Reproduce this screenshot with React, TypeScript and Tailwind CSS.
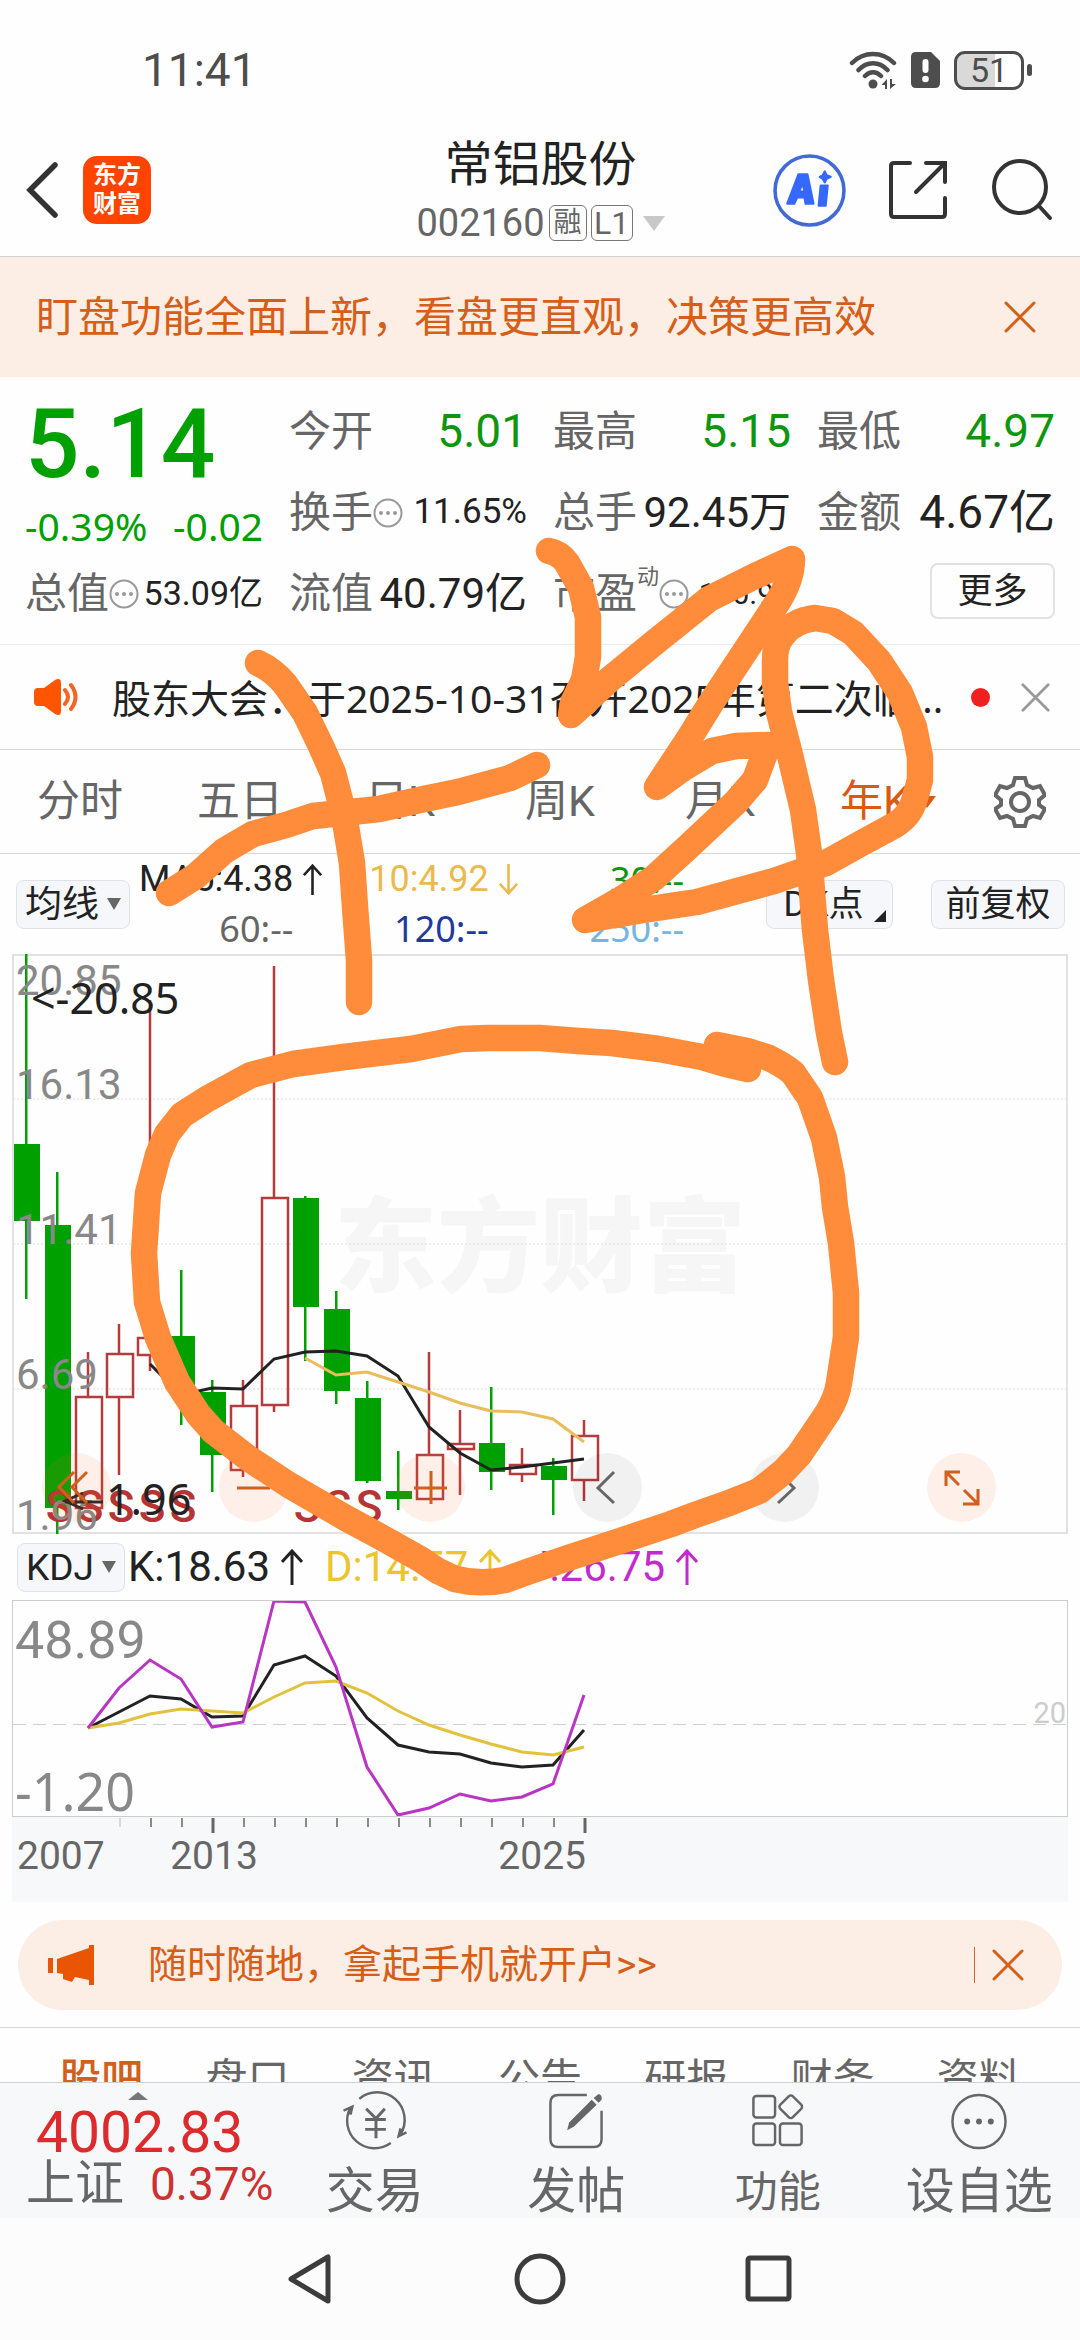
import React from "react";

const candles = [
  // [high, bodyTop, bodyBottom, low, rising]
  [0, 190, 267, 345, 0],
  [218, 271, 554, 580, 0],
  [398, 443, 554, 554, 1],
  [370, 400, 443, 521, 1],
  [46, 384, 401, 417, 1],
  [316, 382, 436, 471, 0],
  [426, 438, 501, 538, 0],
  [426, 452, 516, 523, 1],
  [12, 244, 451, 458, 1],
  [242, 244, 353, 407, 0],
  [337, 355, 437, 450, 0],
  [427, 444, 527, 529, 0],
  [497, 537, 545, 556, 0],
  [398, 501, 545, 545, 1],
  [456, 490, 495, 541, 1],
  [433, 489, 518, 536, 0],
  [494, 511, 520, 528, 1],
  [504, 512, 526, 561, 0],
  [466, 482, 526, 547, 1],
];

const ma5 = [410, 441, 434, 435, 405, 398, 397, 402, 422, 473, 499, 516, 513, 509, 505];
const ma10 = [404, 421, 418, 428, 438, 449, 457, 458, 465, 488];

const kLine = [128, 112, 96, 99, 117, 116, 65, 56, 76, 118, 145, 152, 154, 163, 167, 165, 130];
const dLine = [128, 123, 114, 109, 111, 113, 97, 83, 81, 93, 111, 125, 135, 144, 152, 155, 147];
const jLine = [128, 88, 60, 79, 127, 122, 1, 2, 67, 167, 215, 208, 194, 201, 197, 184, 95];

const STEP = 31;

function toPoints(values: number[], startIndex: number) {
  return values.map((v, i) => `${14 + (startIndex + i) * STEP},${v}`).join(" ");
}

function Cross({ className }: { className: string }) {
  return (
    <svg viewBox="0 0 32 32" className={className} fill="none" stroke="currentColor" strokeLinecap="round">
      <path d="M2 2 30 30M30 2 2 30" strokeWidth="3" />
    </svg>
  );
}

function Trend({ down = false, className }: { down?: boolean; className: string }) {
  return (
    <svg viewBox="0 0 22 36" className={className} fill="none" stroke="currentColor" strokeWidth="3">
      {down ? <path d="M11 0V33M1 23 11 34 21 23" /> : <path d="M11 36V3M1 13 11 2 21 13" />}
    </svg>
  );
}

function Hint() {
  return (
    <svg viewBox="0 0 30 30" className="size-[30px] text-[#999]" fill="currentColor">
      <circle cx="15" cy="15" r="13.5" fill="none" stroke="currentColor" strokeWidth="2" />
      <circle cx="8" cy="15" r="2" />
      <circle cx="15" cy="15" r="2" />
      <circle cx="22" cy="15" r="2" />
    </svg>
  );
}

function StatusBar() {
  return (
    <div className="flex h-[124px] items-center justify-between pt-4 pl-[142px] pr-12 text-[#4d4d4d]">
      <span className="text-[46px] leading-none">11:41</span>
      <div className="flex items-center gap-[14px]">
        <svg viewBox="0 0 48 38" className="h-[38px] w-12" fill="none" stroke="currentColor" strokeLinecap="round" strokeWidth="4.5">
          <path d="M3 12C15 0 33 0 45 12M9.500 19C18 10 30 10 38.500 19M16 25C21 20 27 20 32 25" />
          <circle cx="24" cy="33" r="4.500" fill="currentColor" stroke="none" />
          <path d="M32.500 34 38 28V38H36V34ZM47 33 41 38V28H43V33Z" fill="currentColor" stroke="none" />
        </svg>
        <svg viewBox="0 0 29 36" className="h-9 w-[29px]">
          <path d="M5 0H20L29 9V31Q29 36 24 36H5Q0 36 0 31V5Q0 0 5 0Z" fill="currentColor" />
          <path d="M14.500 10V18" stroke="#fff" strokeWidth="6" strokeLinecap="round" />
          <circle cx="14.500" cy="27" r="3.300" fill="#fff" />
        </svg>
        <div className="flex items-center gap-[3px]">
          <div className="flex h-[39px] w-[70px] items-center justify-center rounded-[11px] border-3 border-[#4d4d4d] bg-linear-to-r from-[#d9d9d9] from-60% to-white to-60% text-[34px] leading-none">
            51
          </div>
          <div className="h-3 w-[5px] rounded-full bg-[#4d4d4d]" />
        </div>
      </div>
    </div>
  );
}

function Header() {
  return (
    <header className="grid h-[133px] grid-cols-[1fr_auto_1fr] items-center border-b border-[#d2d2d2] pr-[27px] pl-[26px]">
      <div className="flex items-center gap-[24px]">
        <button aria-label="返回">
          <svg viewBox="0 0 33 56" className="h-14 w-[33px]" fill="none" stroke="#333" strokeWidth="5.500" strokeLinecap="round">
            <path d="M29 3 4 28 29 53" />
          </svg>
        </button>
        <div className="flex size-[68px] flex-col items-center justify-center rounded-[14px] bg-[#ff4400] text-2xl leading-[29px] font-bold text-white">
          <span>东方</span>
          <span>财富</span>
        </div>
      </div>
      <div className="flex flex-col items-center pt-1 pl-[2px]">
        <h1 className="text-[48px] leading-[62px] text-[#222]">常铝股份</h1>
        <button className="flex h-[54px] items-center text-[#666]">
          <span className="text-[38px]">002160</span>
          <span className="ml-1 flex h-9 w-[38px] items-center justify-center rounded-md border border-[#777] text-[28px]">融</span>
          <span className="ml-1 flex h-9 w-[42px] items-center justify-center rounded-md border border-[#777] text-[32px]">L1</span>
          <svg viewBox="0 0 22 15" className="ml-[10px] h-[15px] w-[22px]" fill="#c8c8c8">
            <path d="M0 0H22L11 15Z" />
          </svg>
        </button>
      </div>
      <div className="flex items-center justify-end">
        <button aria-label="AI">
          <svg viewBox="0 0 72 72" className="size-[73px]">
            <circle cx="36" cy="36" r="34" fill="none" stroke="#4169d8" strokeWidth="3.500" />
            <path fill="#3568fb" stroke="#3568fb" strokeWidth="2" strokeLinejoin="round" fillRule="evenodd" d="M25 20H34L40 49H32L31 43H24L21 49H14ZM29 29 26 37H31Z" />
            <path fill="#3568fb" stroke="#3568fb" strokeWidth="2" strokeLinejoin="round" d="M47 31H54L52 51H45ZM51 17 53 21 57 22.500 53 24.500 51 28 49 24.500 46 22.500 49 21Z" />
          </svg>
        </button>
        <button aria-label="分享" className="ml-[42px]">
          <svg viewBox="0 0 60 60" className="size-[60px]" fill="none" stroke="#333" strokeWidth="4" strokeLinecap="round">
            <path d="M22 3H6Q3 3 3 6V54Q3 57 6 57H54Q57 57 57 54V38M38 3H57V22M56 4 28 32" />
          </svg>
        </button>
        <button aria-label="搜索" className="ml-[43px]">
          <svg viewBox="0 0 62 64" className="h-16 w-[62px]" fill="none" stroke="#333" strokeWidth="4" strokeLinecap="round">
            <circle cx="29" cy="29" r="26" />
            <path d="M48 48 59 60" />
          </svg>
        </button>
      </div>
    </header>
  );
}

function Stat({ label, value, size, color = "text-[#222]", note, sup }: {
  label: string;
  value: string;
  size: string;
  color?: string;
  note?: boolean;
  sup?: string;
}) {
  return (
    <div className="flex h-[81px] items-center justify-between whitespace-nowrap">
      <div className="flex items-center text-[42px] text-[#666]">
        {label}
        {sup && <sup className="top-0 self-start pt-1 text-[22px] leading-none">{sup}</sup>}
        {note && <Hint />}
      </div>
      <span className={`${size} ${color}`}>{value}</span>
    </div>
  );
}

function Quote() {
  return (
    <section className="grid grid-cols-4 gap-x-[26px] border-b border-[#ebebeb] px-[25px] pt-[14px] pb-[10px]">
      <div className="row-span-2 text-[#00a000]">
        <div className="h-[106px] text-[96px] leading-[106px] font-medium">5.14</div>
        <div className="flex h-14 items-center justify-between font-['Noto_Sans'] text-[39px] leading-none">
          <span>-0.39%</span>
          <span>-0.02</span>
        </div>
      </div>
      <Stat label="今开" value="5.01" size="text-[46px]" color="text-[#0f960f]" />
      <Stat label="最高" value="5.15" size="text-[46px]" color="text-[#0f960f]" />
      <Stat label="最低" value="4.97" size="text-[46px]" color="text-[#0f960f]" />
      <Stat label="换手" value="11.65%" size="text-[35px]" note />
      <Stat label="总手" value="92.45万" size="text-[42px]" />
      <Stat label="金额" value="4.67亿" size="text-[46px]" />
      <Stat label="总值" value="53.09亿" size="text-[34px]" note />
      <Stat label="流值" value="40.79亿" size="text-[42px]" />
      <Stat label="市盈" value="130.95" size="text-[30px]" note sup="动" />
      <div className="flex h-[81px] items-start justify-end pt-[10px]">
        <button className="h-14 w-[125px] rounded-lg border-2 border-[#e2e2e2] text-[35px] leading-none text-[#222]">更多</button>
      </div>
    </section>
  );
}

function Notice() {
  return (
    <section className="flex h-[105px] items-center border-b border-[#d6d8da] pr-[30px] pl-[34px]">
      <svg viewBox="0 0 44 36" className="h-9 w-11 shrink-0" fill="#ff5500">
        <path d="M4 9H10L21 1Q27-2 27 4V32Q27 38 21 35L10 27H4Q0 27 0 23V13Q0 9 4 9Z" />
        <path d="M31 11Q37 18 31 25M37 6Q46 18 37 30" fill="none" stroke="#f26522" strokeWidth="4" strokeLinecap="round" />
      </svg>
      <a
        href="#notice"
        className="ml-[34px] flex-1 font-['Noto_Sans','Noto_Sans_CJK_SC',sans-serif] text-[39px] leading-none whitespace-nowrap text-[#222]"
      >
        股东大会：于2025-10-31召开2025年第二次临...
      </a>
      <span className="size-[19px] rounded-full bg-[#f0201e]" />
      <button aria-label="关闭公告" className="ml-[31px]">
        <Cross className="size-[29px] text-[#999]" />
      </button>
    </section>
  );
}

function PeriodTabs() {
  return (
    <nav className="flex h-[104px] border-b border-[#d6d8da] text-[43px] text-[#666]">
      {["分时", "五日", "日K", "周K", "月K"].map((t) => (
        <button key={t} className="flex-[4]">{t}</button>
      ))}
      <button className="flex-[4] text-[#d95a12]">
        <span className="flex items-center justify-center gap-2 pl-4">
          年K
          <svg viewBox="0 0 18 12" className="h-3 w-[18px]" fill="currentColor">
            <path d="M0 0H18L9 12Z" />
          </svg>
        </span>
      </button>
      <button aria-label="设置" className="flex flex-[3] items-center justify-center">
        <svg viewBox="0 0 52 52" className="size-[52px]" fill="none" stroke="currentColor" strokeWidth="4">
          <path d="M21 2H31L33 9 39 12 46 10 51 19 45 24V29L51 33 46 42 39 40 33 43 31 50H21L19 43 13 40 6 42 1 33 7 29V24L1 19 6 10 13 12 19 9Z" />
          <circle cx="26" cy="26" r="9" />
        </svg>
      </button>
    </nav>
  );
}

function Picker({ label, options, className }: { label: string; options: string[]; className: string }) {
  return (
    <div className={`relative h-[49px] shrink-0 ${className}`}>
      <select
        aria-label={label}
        className="h-full w-full appearance-none rounded-lg border border-[#dfe2e8] bg-[#f5f7fa] pl-2 text-[37px] leading-none text-[#222]"
      >
        {options.map((o) => (
          <option key={o}>{o}</option>
        ))}
      </select>
      <svg viewBox="0 0 14 12" className="pointer-events-none absolute top-[18px] right-[9px] h-3 w-[14px]" fill="#666">
        <path d="M0 0H14L7 12Z" />
      </svg>
    </div>
  );
}

function AverageRow() {
  const items = [
    { text: "MA5:4.38", color: "text-[#222]", trend: "up" },
    { text: "10:4.92", color: "text-[#ecb94f]", trend: "down" },
    { text: "30:--", color: "font-['Noto_Sans'] text-[#0f960f]" },
    { text: "60:--", color: "font-['Noto_Sans'] text-[#666]" },
    { text: "120:--", color: "font-['Noto_Sans'] text-[#20399b]" },
    { text: "250:--", color: "font-['Noto_Sans'] text-[#74b5e4]" },
  ];
  return (
    <section className="flex h-[100px] items-center pr-[15px] pl-4">
      <Picker label="指标" options={["均线"]} className="w-[114px]" />
      <div className="grid w-[586px] grid-cols-3 text-[36px] leading-[49px]">
        {items.map((it) => (
          <div key={it.text} className={`flex items-center justify-end gap-[10px] ${it.color}`}>
            {it.text}
            <span className="w-[22px]">
              {it.trend && <Trend down={it.trend === "down"} className="h-[31px] w-[19px]" />}
            </span>
          </div>
        ))}
      </div>
      <button className="relative ml-auto h-[49px] w-[127px] rounded-lg border border-[#dfe2e8] bg-[#f5f7fa] pr-3 text-[35px] leading-none text-[#222]">
        DK点
        <svg viewBox="0 0 12 12" className="absolute right-[6px] bottom-[6px] size-3" fill="#222">
          <path d="M12 0V12H0Z" />
        </svg>
      </button>
      <button className="ml-[38px] h-[49px] w-[134px] rounded-lg border border-[#dfe2e8] bg-[#f5f7fa] text-[35px] leading-none text-[#222]">
        前复权
      </button>
    </section>
  );
}

function ChartButton({ label, gray, d }: { label: string; gray?: boolean; d: string }) {
  return (
    <button
      aria-label={label}
      className={`size-[69px] rounded-full ${gray ? "bg-black/5 text-[#666]" : "bg-[#ff6a20]/10 text-[#d0601c]"}`}
    >
      <svg viewBox="0 0 69 69" className="size-full" fill="none" stroke="currentColor" strokeWidth="3">
        <path d={d} />
      </svg>
    </button>
  );
}

function PriceChart() {
  const grid = [
    { y: 145, label: "16.13" },
    { y: 290, label: "11.41" },
    { y: 435, label: "6.69" },
  ];
  return (
    <section className="relative mx-3">
      <svg viewBox="0 0 1056 580" className="block w-full">
        <text x="528" y="330" fontSize="103" fontWeight="900" textAnchor="middle" fill="#f6f6f6">东方财富</text>
        {grid.map((g) => (
          <line key={g.y} x1="1" x2="1055" y1={g.y} y2={g.y} stroke="#dcdcdc" strokeDasharray="2 2" />
        ))}
        <rect x="1" y="1" width="1054" height="578" fill="none" stroke="#e2e2e2" strokeWidth="2" />
        {candles.map(([high, top, bottom, low, rising], i) => {
          const x = 14 + i * STEP;
          return rising ? (
            <g key={i} fill="none" stroke="#b53c3c" strokeWidth="2.500">
              <path d={`M${x} ${high}V${top}M${x} ${bottom}V${low}`} />
              <rect x={x - 12} y={top} width="26" height={bottom - top} />
            </g>
          ) : (
            <g key={i} fill="#00a000">
              <rect x={x - 1} y={high} width="2.500" height={low - high} />
              <rect x={x - 12} y={top} width="26" height={bottom - top} />
            </g>
          );
        })}
        <polyline points={toPoints(ma5, 4)} fill="none" stroke="#222" strokeWidth="3" />
        <polyline points={toPoints(ma10, 9)} fill="none" stroke="#e9bd5b" strokeWidth="3" />
        <g fontSize="44" fontWeight="500" fill="#b73434" textAnchor="middle">
          {[47, 78, 109, 140, 171, 295, 326, 357].map((x) => (
            <text key={x} x={x} y="568">S</text>
          ))}
        </g>
        <g fontSize="42" fill="#888">
          <text x="4" y="41">20.85</text>
          {grid.map((g) => (
            <text key={g.y} x="4" y={g.y}>{g.label}</text>
          ))}
          <text x="4" y="576">1.96</text>
        </g>
        <g fontSize="43" fill="#222" className="font-['Noto_Sans']">
          <text x="19" y="60">&lt;-20.85</text>
          <text x="94" y="561">1.96</text>
          <path d="M71 539 53 547 71 555M53 548H91" fill="none" stroke="#222" strokeWidth="3" />
        </g>
      </svg>
      <div className="absolute inset-x-0 bottom-[12px] flex justify-between pr-[72px] pl-[30px]">
        <ChartButton label="最早" d="M32 19 17 34 32 50M45 19 30 34 45 50" />
        <ChartButton label="缩小" d="M18 35H51" />
        <ChartButton label="放大" d="M18 35H51M35 18V51" />
        <ChartButton label="前移" gray d="M41 19 25 35 41 50" />
        <ChartButton label="后移" gray d="M28 19 44 35 28 50" />
        <ChartButton label="全屏" d="M19 33V19H33M19 19 32 32M37 37 50 50M36 51H51V36" />
      </div>
    </section>
  );
}

function KdjChart() {
  return (
    <section className="mx-3">
      <div className="flex h-[66px] items-center pl-[5px] text-[42px] leading-none">
        <Picker label="副图指标" options={["KDJ"]} className="w-[108px]" />
        <div className="ml-[3px] flex items-center gap-[11px] text-[#222]">
          K:18.63
          <Trend className="h-9 w-[22px]" />
        </div>
        <div className="ml-[22px] flex items-center gap-[11px] text-[#ecc52e]">
          D:14.57
          <Trend className="h-9 w-[22px]" />
        </div>
        <div className="ml-[25px] flex items-center gap-[11px] text-[#c02ccb]">
          J:26.75
          <Trend className="h-9 w-[22px]" />
        </div>
      </div>
      <svg viewBox="0 0 1056 302" className="block w-full">
        <rect x="0" y="217" width="1056" height="85" fill="#f7f8fa" />
        <line x1="1" x2="1055" y1="124.500" y2="124.500" stroke="#cfcfcf" strokeDasharray="13 7" />
        <g fontSize="52" fill="#888">
          <text x="3" y="58">48.89</text>
          <text x="3" y="211" className="font-['Noto_Sans']">-1.20</text>
        </g>
        <text x="1054" y="123" fontSize="29" textAnchor="end" fill="#ccc">20</text>
        <polyline points={toPoints(kLine, 2)} fill="none" stroke="#222" strokeWidth="3" />
        <polyline points={toPoints(dLine, 2)} fill="none" stroke="#e2c23c" strokeWidth="3" />
        <polyline points={toPoints(jLine, 2)} fill="none" stroke="#b935c4" strokeWidth="3" />
        <rect x="0.500" y="0.500" width="1055" height="216" fill="none" stroke="#ccc" />
        {Array.from({ length: 16 }, (_, i) => {
          const long = i === 3 || i === 15;
          return (
            <line
              key={i}
              x1={108 + i * STEP}
              x2={108 + i * STEP}
              y1="218"
              y2={long ? 233 : 227}
              stroke={i === 0 ? "#ccc" : "#666"}
              strokeWidth={long ? 3 : 1.5}
            />
          );
        })}
        <g fontSize="39" fill="#666">
          <text x="5" y="269">2007</text>
          <text x="202" y="269" textAnchor="middle">2013</text>
          <text x="574" y="269" textAnchor="end">2025</text>
        </g>
      </svg>
    </section>
  );
}

function OpenAccount() {
  return (
    <section className="mx-[18px] mt-[18px] mb-[17px] flex h-[90px] items-center rounded-full bg-[#fcede5] pr-[38px] pl-[30px] text-[#d65e16]">
      <svg viewBox="0 0 46 40" className="h-10 w-[46px]" fill="#ea5504">
        <path d="M0 13H5V28H0ZM9 14 41 3V0H46V40H41V35L27 32 24 37 15 34V29L9 28Z" />
      </svg>
      <a href="#open" className="ml-[54px] text-[39px]">随时随地，拿起手机就开户&gt;&gt;</a>
      <span className="ml-auto h-9 w-px bg-[#c8672c]" />
      <button aria-label="关闭广告" className="ml-[17px]">
        <Cross className="size-8" />
      </button>
    </section>
  );
}

function InfoTabs() {
  return (
    <nav className="flex h-[55px] overflow-hidden border-t border-[#d2d6d9] px-7 pt-[22px] text-[42px] leading-[60px] text-[#666]">
      {["股吧", "盘口", "资讯", "公告", "研报", "财务", "资料"].map((t, i) => (
        <button key={t} className={i === 0 ? "h-[60px] flex-1 font-medium text-[#d0601c]" : "h-[60px] flex-1"}>
          {t}
        </button>
      ))}
    </nav>
  );
}

function Action({ label, size = "text-[49px]", children }: { label: string; size?: string; children: React.ReactNode }) {
  return (
    <button className="flex flex-1 flex-col items-center pt-2 whitespace-nowrap">
      <svg viewBox="0 0 66 60" className="h-[60px] w-[66px]" fill="none" stroke="currentColor" strokeWidth="2.500">
        {children}
      </svg>
      <span className={`${size} mt-4 leading-[52px]`}>{label}</span>
    </button>
  );
}

function BottomBar() {
  return (
    <footer className="flex h-[136px] border-t border-[#cfd2d5] bg-[#f6f8fa] text-[#666]">
      <button className="flex w-[274px] shrink-0 flex-col pl-[26px] text-left">
        <svg viewBox="0 0 20 8" className="mt-[9px] ml-[102px] h-2 w-5" fill="#777">
          <path d="M10 0 20 8H0Z" />
        </svg>
        <span className="mt-[3px] ml-[10px] text-[57px] leading-[60px] text-[#dd2a2c]">4002.83</span>
        <span className="flex items-center leading-[42px]">
          <span className="text-[49px]">上证</span>
          <span className="ml-[26px] text-[46px] text-[#cf3030]">0.37%</span>
        </span>
      </button>
      <Action label="交易">
        <path d="M17 8A28 28 0 0 1 59 44M49 53A28 28 0 0 1 8 17M1 20 10 16 8 24M65 42 57 46 59 38" />
        <path d="M24 18 34 28 43 18M34 28V48M23 29H44M23 39H44" strokeWidth="3" />
      </Action>
      <Action label="发帖">
        <path d="M44 4H15Q7 4 7 12V49Q7 57 15 57H51Q59 57 59 49V20" />
        <path d="M24 40 26 32 49 9 54 14 31 36ZM51 7 56 3Q60 4 59 9L56 12Z" fill="currentColor" stroke="none" />
      </Action>
      <Action label="功能" size="text-[43px]">
        <rect x="8" y="5" width="22" height="22" rx="3" />
        <rect x="8" y="33" width="22" height="22" rx="3" />
        <rect x="35" y="33" width="22" height="22" rx="3" />
        <rect x="37" y="7" width="18" height="18" rx="3" transform="rotate(45 46 16)" />
      </Action>
      <Action label="设自选">
        <circle cx="33" cy="31" r="27" />
        <g fill="currentColor" stroke="none">
          <circle cx="21" cy="31" r="3" />
          <circle cx="33" cy="31" r="3" />
          <circle cx="45" cy="31" r="3" />
        </g>
      </Action>
    </footer>
  );
}

function SystemNav() {
  return (
    <div className="flex h-[122px] items-center justify-center gap-[178px] bg-[#fcfcfc]">
      <button aria-label="后退">
        <svg viewBox="0 0 52 52" className="size-[52px]" fill="none" stroke="#3c3c3c" strokeWidth="5" strokeLinejoin="round">
          <path d="M7 26 44 4V48Z" />
        </svg>
      </button>
      <button aria-label="主页">
        <svg viewBox="0 0 52 52" className="size-[52px]" fill="none" stroke="#3c3c3c" strokeWidth="5">
          <circle cx="26" cy="26" r="23" />
        </svg>
      </button>
      <button aria-label="最近任务">
        <svg viewBox="0 0 52 52" className="size-[52px]" fill="none" stroke="#3c3c3c" strokeWidth="5">
          <rect x="4" y="5" width="41" height="41" rx="2" />
        </svg>
      </button>
    </div>
  );
}

// Hand-drawn marker notes on top of the page
function Scribble() {
  return (
    <svg
      viewBox="0 0 1080 2340"
      className="pointer-events-none absolute inset-x-0 top-0 w-full"
      fill="none"
      stroke="#ff8c3b"
      strokeWidth="26.500"
      strokeLinecap="round"
      strokeLinejoin="round"
    >
      <path d="M169 893 196 876 224 851 253 834 286 825 313 816 351 812 379 809 424 799 458 792 510 778 537 765" />
      <path d="M258 663Q273 670 285 684L305 713 321 746 333 773 340 800 346 827 352 863 355 907 359 960V1002" />
      <path d="M549 551Q560 553 567 563L581 588 588 617V657L584 680 573 703 571 715 609 680 654 643 709 599 753 577 792 559Q792 580 777 603L746 650 711 703 690 737 657 787 682 769 712 751 736 746 768 745 755 780 736 802 688 847 654 878 620 900 585 920 643 910 697 902 774 881 826 863 860 844 895 825Q911 815 915 798L920 780V757L914 727 900 693 879 661 853 633 833 621 815 618Q793 621 783 635 775 644 775 660V683L779 712 790 755 803 810 809 853 815 930 821 980 829 1033 835 1062" />
      <path d="M717 1045 747 1051 769 1058Q785 1066 793 1073L810 1098 824 1138 832 1177 835 1207 841 1243 846 1293V1337L839 1383Q837 1397 828 1412L816 1430 799 1455 783 1472 759 1491 729 1503 695 1515 671 1524 623 1540 568 1558 530 1571 505 1580Q480 1585 455 1579L438 1571 420 1559 379 1536 344 1517 289 1485 248 1458 213 1431 198 1414 177 1382 158 1338 147 1302 144 1253 148 1193 158 1155 167 1134 182 1115 207 1099 251 1075 293 1064 344 1057 411 1049 461 1039 489 1038H540L578 1041 612 1043 659 1049 702 1057 726 1064 748 1069" />
    </svg>
  );
}

export default function App() {
  return (
    <div className="relative min-h-screen w-full overflow-hidden bg-[#fefefe] font-[Roboto,'Noto_Sans_CJK_SC',sans-serif]">
      <StatusBar />
      <Header />
      <section className="flex h-[120px] items-center justify-between bg-[#fcede5] pr-[44px] pl-9 text-[#d65e16]">
        <a href="#new" className="text-[42px]">盯盘功能全面上新，看盘更直观，决策更高效</a>
        <button aria-label="关闭提示">
          <Cross className="size-8" />
        </button>
      </section>
      <Quote />
      <Notice />
      <PeriodTabs />
      <AverageRow />
      <PriceChart />
      <KdjChart />
      <OpenAccount />
      <InfoTabs />
      <BottomBar />
      <SystemNav />
      <Scribble />
    </div>
  );
}
